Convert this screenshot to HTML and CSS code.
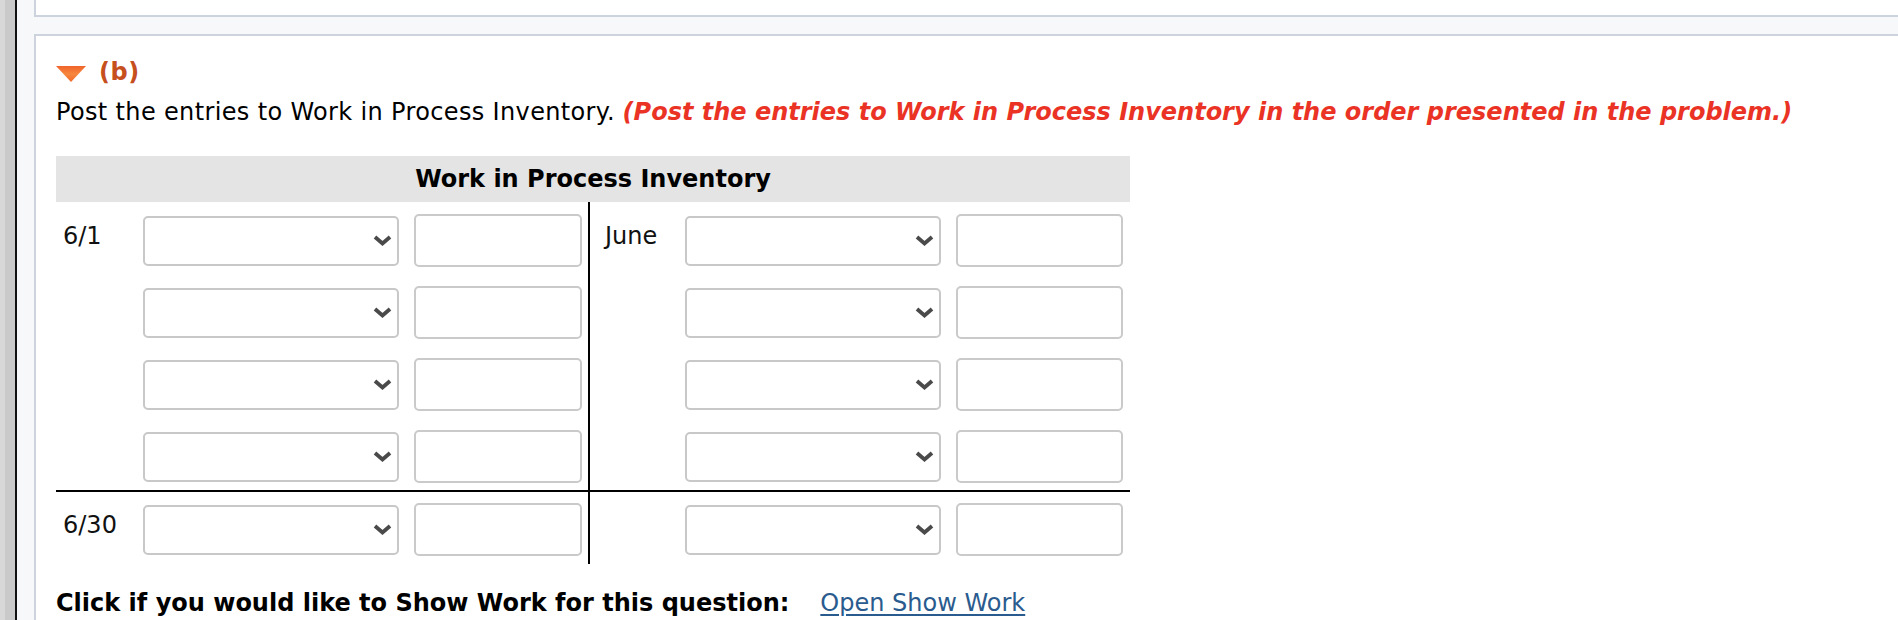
FILE: index.html
```html
<!DOCTYPE html>
<html lang="en">
<head>
<meta charset="utf-8">
<title>Work in Process Inventory</title>
<link rel="stylesheet" href="styles.css">
</head>
<body>
<div class="frame">
  <div class="strip"><div class="strip-light"></div><div class="strip-dark"></div></div>
  <div class="rule"></div>
  <div class="page">
    <div class="panel panel-top"></div>
    <div class="panel panel-main">
      <div class="part-head">
        <svg class="tri" width="30" height="16" viewBox="0 0 30 16" aria-hidden="true">
          <defs>
            <linearGradient id="tg" x1="0" y1="0" x2="0" y2="1">
              <stop offset="0" stop-color="#f0632a"/>
              <stop offset="0.5" stop-color="#f6873e"/>
              <stop offset="1" stop-color="#f36a2b"/>
            </linearGradient>
          </defs>
          <polygon points="0,0 30,0 15,16" fill="url(#tg)"/>
        </svg>
        <span class="part-label">(b)</span>
      </div>
      <p class="instr"><span class="plain">Post the entries to Work in Process Inventory.</span> <em class="note">(Post the entries to Work in Process Inventory in the order presented in the problem.)</em></p>

      <div class="taccount">
        <div class="ta-title">Work in Process Inventory</div>
        <div class="ta-grid">
          <div class="ta-cell ta-left ta-upper">
            <div class="ta-row"><span class="ta-label">6/1</span><div class="sel"><svg class="chev" width="19" height="11" viewBox="0 0 19 11"><polyline points="2,2 9.5,8.5 17,2" fill="none" stroke="#4a4a4a" stroke-width="3.8"/></svg></div><input class="amt" type="text"></div>
            <div class="ta-row"><span class="ta-label"></span><div class="sel"><svg class="chev" width="19" height="11" viewBox="0 0 19 11"><polyline points="2,2 9.5,8.5 17,2" fill="none" stroke="#4a4a4a" stroke-width="3.8"/></svg></div><input class="amt" type="text"></div>
            <div class="ta-row"><span class="ta-label"></span><div class="sel"><svg class="chev" width="19" height="11" viewBox="0 0 19 11"><polyline points="2,2 9.5,8.5 17,2" fill="none" stroke="#4a4a4a" stroke-width="3.8"/></svg></div><input class="amt" type="text"></div>
            <div class="ta-row"><span class="ta-label"></span><div class="sel"><svg class="chev" width="19" height="11" viewBox="0 0 19 11"><polyline points="2,2 9.5,8.5 17,2" fill="none" stroke="#4a4a4a" stroke-width="3.8"/></svg></div><input class="amt" type="text"></div>
          </div>
          <div class="ta-cell ta-right ta-upper">
            <div class="ta-row"><span class="ta-label">June</span><div class="sel"><svg class="chev" width="19" height="11" viewBox="0 0 19 11"><polyline points="2,2 9.5,8.5 17,2" fill="none" stroke="#4a4a4a" stroke-width="3.8"/></svg></div><input class="amt" type="text"></div>
            <div class="ta-row"><span class="ta-label"></span><div class="sel"><svg class="chev" width="19" height="11" viewBox="0 0 19 11"><polyline points="2,2 9.5,8.5 17,2" fill="none" stroke="#4a4a4a" stroke-width="3.8"/></svg></div><input class="amt" type="text"></div>
            <div class="ta-row"><span class="ta-label"></span><div class="sel"><svg class="chev" width="19" height="11" viewBox="0 0 19 11"><polyline points="2,2 9.5,8.5 17,2" fill="none" stroke="#4a4a4a" stroke-width="3.8"/></svg></div><input class="amt" type="text"></div>
            <div class="ta-row"><span class="ta-label"></span><div class="sel"><svg class="chev" width="19" height="11" viewBox="0 0 19 11"><polyline points="2,2 9.5,8.5 17,2" fill="none" stroke="#4a4a4a" stroke-width="3.8"/></svg></div><input class="amt" type="text"></div>
          </div>
          <div class="ta-cell ta-left ta-lower">
            <div class="ta-row"><span class="ta-label">6/30</span><div class="sel"><svg class="chev" width="19" height="11" viewBox="0 0 19 11"><polyline points="2,2 9.5,8.5 17,2" fill="none" stroke="#4a4a4a" stroke-width="3.8"/></svg></div><input class="amt" type="text"></div>
          </div>
          <div class="ta-cell ta-right ta-lower">
            <div class="ta-row"><span class="ta-label"></span><div class="sel"><svg class="chev" width="19" height="11" viewBox="0 0 19 11"><polyline points="2,2 9.5,8.5 17,2" fill="none" stroke="#4a4a4a" stroke-width="3.8"/></svg></div><input class="amt" type="text"></div>
          </div>
        </div>
      </div>

      <p class="showwork"><strong>Click if you would like to Show Work for this question:</strong><a class="sw-link" href="#">Open Show Work</a></p>
    </div>
  </div>
</div>
</body>
</html>
```

FILE: styles.css
```css
html, body {
  margin: 0;
  padding: 0;
}
body {
  background: #f7f8fa;
  font-family: "DejaVu Sans", Verdana, sans-serif;
  font-size: 24px;
  color: #000;
  overflow: hidden;
}
.frame {
  display: flex;
  min-height: 620px;
}
.strip {
  display: flex;
  width: 15px;
  flex: none;
}
.strip-light {
  width: 5px;
  background: #d8d8d8;
}
.strip-dark {
  flex: 1;
  background: #cacaca;
}
.rule {
  width: 2px;
  flex: none;
  background: #111;
}
.page {
  flex: 1;
  padding-left: 17px;
  display: flex;
  flex-direction: column;
  gap: 17px;
}
.panel {
  background: #fff;
  border: 2px solid #ccd3dd;
  border-right: none;
}
.panel-top {
  height: 15px;
  border-top: none;
}
.panel-main {
  flex: 1;
  border-bottom: none;
  padding: 0 20px;
}
.part-head {
  display: flex;
  align-items: center;
  gap: 13px;
  height: 30px;
  line-height: 30px;
  margin-top: 21px;
}
.tri {
  display: block;
  margin-top: 3px;
}
.part-label {
  font-weight: bold;
  color: #c64f1e;
  letter-spacing: 0.5px;
}
.instr {
  margin: 10px 0 0;
  line-height: 30px;
  white-space: nowrap;
}
.plain {
  letter-spacing: 0.35px;
}
.note {
  font-weight: bold;
  font-style: italic;
  color: #ea3325;
}
.taccount {
  margin-top: 29px;
  width: 1074px;
}
.ta-title {
  background: #e4e4e4;
  height: 46px;
  line-height: 46px;
  text-align: center;
  font-weight: bold;
}
.ta-grid {
  display: grid;
  grid-template-columns: 534px 540px;
}
.ta-cell {
  display: flex;
  flex-direction: column;
  gap: 19px;
}
.ta-left {
  border-right: 2px solid #000;
  padding-left: 7px;
  padding-right: 6px;
}
.ta-right {
  padding-left: 15px;
  padding-right: 7px;
}
.ta-upper {
  border-bottom: 2px solid #000;
  padding-top: 12px;
  padding-bottom: 7px;
}
.ta-lower {
  padding-top: 11px;
  padding-bottom: 8px;
}
.ta-row {
  display: flex;
  align-items: center;
  height: 53px;
}
.ta-label {
  width: 80px;
  flex: none;
  align-self: flex-start;
  padding-top: 8px;
  line-height: 29px;
  color: #111;
}
.sel {
  box-sizing: border-box;
  width: 256px;
  height: 50px;
  flex: none;
  border: 2px solid #c8c8c8;
  border-radius: 5px;
  background: #fff;
  display: flex;
  align-items: center;
  justify-content: flex-end;
  padding-right: 5px;
}
.chev {
  display: block;
}
.amt {
  box-sizing: border-box;
  width: 168px;
  height: 53px;
  flex: none;
  margin: 0 0 0 15px;
  border: 2px solid #cacaca;
  border-radius: 5px;
  background: #fff;
  padding: 0;
  font: inherit;
}
.ta-right .amt {
  width: 167px;
}
.showwork {
  margin: 24px 0 0;
  line-height: 30px;
  white-space: nowrap;
}
.showwork strong {
  font-weight: bold;
}
.sw-link {
  margin-left: 31px;
  color: #2a5b8e;
  text-decoration: underline;
  text-underline-offset: 3px;
}
```
